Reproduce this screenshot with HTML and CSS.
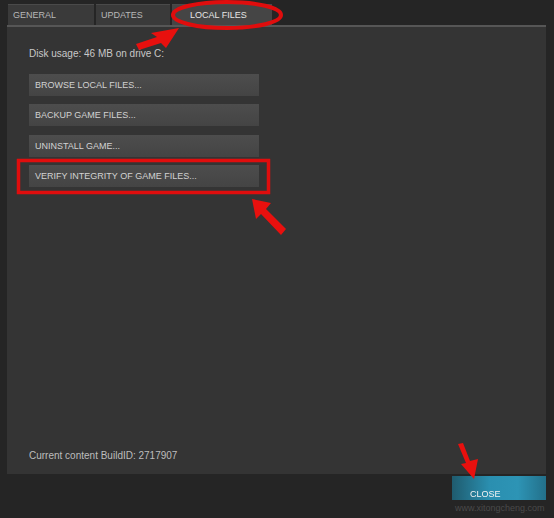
FILE: index.html
```html
<!DOCTYPE html>
<html>
<head>
<meta charset="utf-8">
<link rel="stylesheet" href="styles.css">
</head>
<body>
<div class="window">
  <div class="tabs">
    <div class="tab tab-general">GENERAL</div>
    <div class="tab tab-updates">UPDATES</div>
    <div class="tab tab-local active">LOCAL FILES</div>
  </div>
  <div class="panel">
    <div class="disk">Disk usage: 46 MB on drive C:</div>
    <div class="buttons">
      <div class="btn">BROWSE LOCAL FILES...</div>
      <div class="btn">BACKUP GAME FILES...</div>
      <div class="btn">UNINSTALL GAME...</div>
      <div class="btn verify">VERIFY INTEGRITY OF GAME FILES...</div>
    </div>
    <div class="spacer"></div>
    <div class="build">Current content BuildID: 2717907</div>
  </div>
  <div class="footer">
    <div class="close">CLOSE</div>
    <div class="watermark">www.xitongcheng.com</div>
  </div>
</div>
<svg class="annot" width="554" height="518" viewBox="0 0 554 518">
  <ellipse cx="227" cy="15" rx="54" ry="13" fill="none" stroke="#e00d0d" stroke-width="4"/>
  <rect x="18.5" y="160.5" width="250" height="32" fill="none" stroke="#e00d0d" stroke-width="3.5"/>
  <g fill="#e8100e">
    <polygon points="179,28 166,48 161,43 139,50 136,44 157,37 151,33"/>
    <polygon points="252,199 271,203 266,209 286,229 281,235 261,214 256,219"/>
    <polygon points="458,444 463,443 470,461 478,459 474,479 461,464 466,463"/>
  </g>
</svg>
</body>
</html>
```
FILE: styles.css
```css
html, body {
  margin: 0;
  padding: 0;
}
body {
  width: 554px;
  height: 518px;
  background: #252525;
  font-family: "Liberation Sans", Arial, sans-serif;
  position: relative;
  overflow: hidden;
}
.window {
  display: flex;
  flex-direction: column;
  height: 518px;
}
.tabs {
  display: flex;
  gap: 2px;
  padding: 4px 0 0 8px;
  height: 21px;
}
.tab {
  background: #3a3a3a;
  color: #b8b8b8;
  font-size: 9px;
  display: flex;
  align-items: center;
  padding-left: 5px;
  box-sizing: border-box;
  border-top: 1px solid #4a4a4a;
}
.tab-general { width: 86px; }
.tab-updates { width: 74px; }
.tab-local { width: 100px; padding-left: 18px; }
.tab.active {
  background: #454545;
  color: #e6e6e6;
}
.panel {
  margin: 0 8px 0 7px;
  height: 449px;
  background: #343434;
  border-top: 2px solid #565656;
  box-sizing: border-box;
  display: flex;
  flex-direction: column;
  padding: 21px 0 12px 22px;
}
.disk {
  color: #c8c8c8;
  font-size: 10px;
  line-height: 12px;
}
.buttons {
  display: flex;
  flex-direction: column;
  margin-top: 14px;
}
.btn {
  width: 230px;
  height: 22px;
  box-sizing: border-box;
  background: linear-gradient(#4d4d4d, #444);
  color: #d2d2d2;
  font-size: 9px;
  display: flex;
  align-items: center;
  padding-left: 6px;
  margin-bottom: 8px;
}
.btn:nth-child(2) { margin-bottom: 9px; }
.spacer { flex: 1; }
.build {
  color: #bdbdbd;
  font-size: 10px;
  line-height: 12px;
}
.footer {
  flex: 1;
  position: relative;
}
.close {
  position: absolute;
  left: 452px;
  top: 2px;
  width: 94px;
  height: 24px;
  background: linear-gradient(90deg, #1f5b6e, #2a8fb0 40%, #2d94b5 70%, #23708a);
  color: #f2f2f2;
  font-size: 9px;
  display: flex;
  align-items: flex-end;
  padding: 0 0 1px 18px;
  box-sizing: border-box;
  filter: blur(0.6px);
}
.watermark {
  position: absolute;
  left: 455px;
  top: 29px;
  color: #4a4a4a;
  font-size: 9px;
}
.annot {
  position: absolute;
  left: 0;
  top: 0;
  pointer-events: none;
}
```
